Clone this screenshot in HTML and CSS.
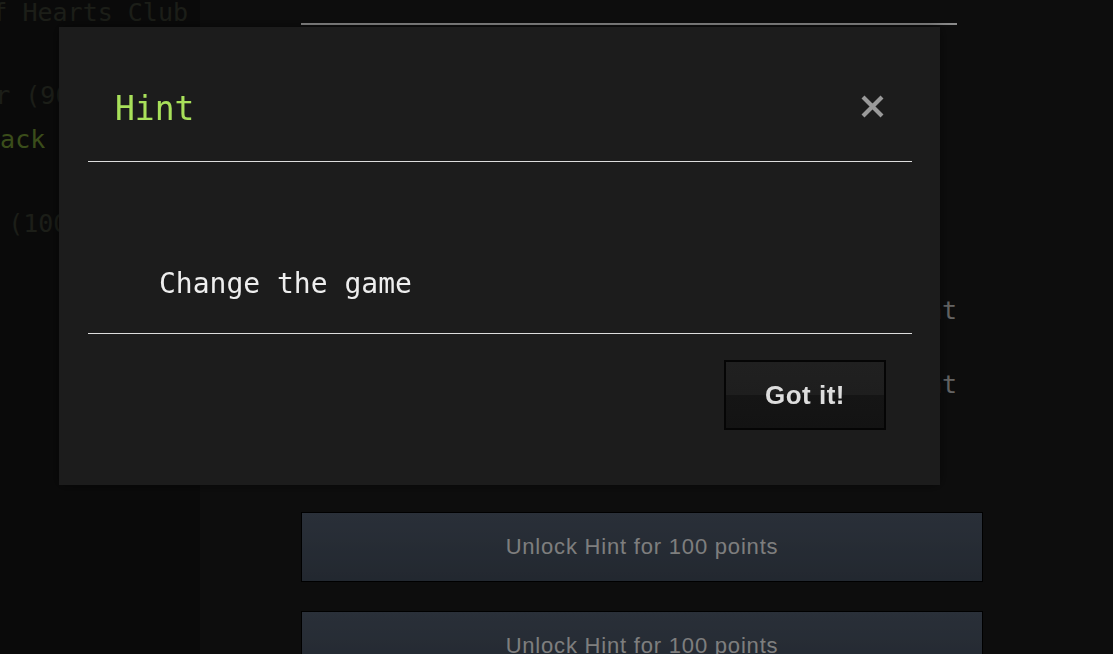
FILE: index.html
```html
<!DOCTYPE html>
<html lang="en">
<head>
    <meta charset="UTF-8">
    <meta name="viewport" content="width=device-width, initial-scale=1.0">
    <title>Challenges</title>
    <link rel="stylesheet" href="styles.css">
</head>
<body>

    <div class="page">
        <aside class="sidebar">
            <div class="chal chal-1">Queen of Hearts Club</div>
            <div class="chal chal-2">Joker (90)</div>
            <div class="chal chal-3 solved">Black (80)</div>
            <div class="chal chal-4">Ace (100)</div>
        </aside>

        <main class="main">
            <h2 class="chal-title">Hearing</h2>
            <div class="hint-row">Hint</div>
            <div class="hint-row">Hint</div>
            <button class="unlock">Unlock Hint for 100 points</button>
            <button class="unlock">Unlock Hint for 100 points</button>
        </main>
    </div>

    <!-- hint modal -->
    <div class="backdrop"></div>
    <div class="modal">
        <div class="modal-header">
            <h3 class="modal-title">Hint</h3>
            <button class="close" aria-label="Close">
                <svg width="25" height="25" viewBox="0 0 25 25">
                    <path d="M3 3 L22 22 M22 3 L3 22" stroke="#9a9a9a" stroke-width="4.2" stroke-linecap="butt"/>
                </svg>
            </button>
        </div>
        <div class="modal-body">Change the game</div>
        <div class="modal-footer">
            <button class="got-it">Got it!</button>
        </div>
    </div>

</body>
</html>
```

FILE: styles.css
```css
body {
    margin: 0;
    background-color: #171717;
    font-family: "DejaVu Sans Mono", monospace;
    overflow: hidden;
}
.page {
    display: flex;
    height: 654px;
    overflow: hidden;
}
.sidebar {
    width: 200px;
    flex-shrink: 0;
    background-color: #121212;
    overflow: hidden;
    font-size: 25px;
    white-space: nowrap;
}
.chal {
    color: #2f3329;
    line-height: 28px;
}
.chal-1 {
    margin-top: -1px;
    margin-left: -113px;
}
.chal-2 {
    margin-top: 55px;
    margin-left: -65px;
}
.chal-3 {
    margin-top: 16px;
    margin-left: -30px;
}
.chal-4 {
    margin-top: 56px;
    margin-left: -52px;
}
.solved {
    color: #62802c;
}
.main {
    padding-left: 101px;
    width: 682px;
}
.chal-title {
    width: 656px;
    height: 26px;
    margin: -29px 0 0 0;
    padding-bottom: 26px;
    border-bottom: 2px solid #e6e6e6;
    color: #6d8f38;
    font-size: 26px;
    font-weight: normal;
    line-height: 26px;
}
.hint-row {
    width: 656px;
    text-align: right;
    color: #a8a8a8;
    font-size: 25px;
    line-height: 30px;
}
.hint-row:first-of-type {
    margin-top: 271px;
}
.hint-row + .hint-row {
    margin-top: 44px;
}
.unlock {
    display: block;
    width: 682px;
    height: 70px;
    margin-top: 112px;
    background: linear-gradient(#46505f, #3a4350);
    border: 1px solid #000;
    color: #d2d2d2;
    font-family: "Liberation Sans", Arial, sans-serif;
    font-size: 22px;
    letter-spacing: 0.8px;
}
.unlock + .unlock {
    margin-top: 29px;
}
.backdrop {
    position: fixed;
    inset: 0;
    background-color: rgba(0, 0, 0, 0.4);
}
.modal {
    position: fixed;
    left: 59px;
    top: 27px;
    width: 881px;
    height: 458px;
    background-color: #1c1c1c;
    box-shadow: 0 0 12px rgba(0, 0, 0, 0.5);
}
.modal-header {
    display: flex;
    justify-content: space-between;
    align-items: flex-start;
    height: 135px;
    margin: 0 28px 0 29px;
    padding: 65px 27px 0 27px;
    box-sizing: border-box;
    border-bottom: 1px solid #ddd;
}
.modal-title {
    margin: 0;
    color: #a8e05a;
    font-size: 33px;
    font-weight: normal;
    line-height: 1;
}
.close {
    margin-top: 2px;
    padding: 0;
    background: none;
    border: none;
    cursor: pointer;
}
.close svg {
    display: block;
}
.modal-body {
    margin: 0 28px 0 29px;
    padding: 108px 0 35px 71px;
    border-bottom: 1px solid #ddd;
    color: #eee;
    font-size: 28px;
    line-height: 1;
}
.modal-footer {
    display: flex;
    justify-content: flex-end;
    padding: 26px 54px 0 0;
}
.got-it {
    width: 162px;
    height: 70px;
    background: linear-gradient(#202020 0%, #1e1e1e 50%, #151515 50%, #131313 100%);
    border: 2px solid #050505;
    color: #ddd;
    font-family: "Liberation Sans", Arial, sans-serif;
    font-size: 26px;
    font-weight: bold;
    letter-spacing: 0.5px;
    cursor: pointer;
}
```
